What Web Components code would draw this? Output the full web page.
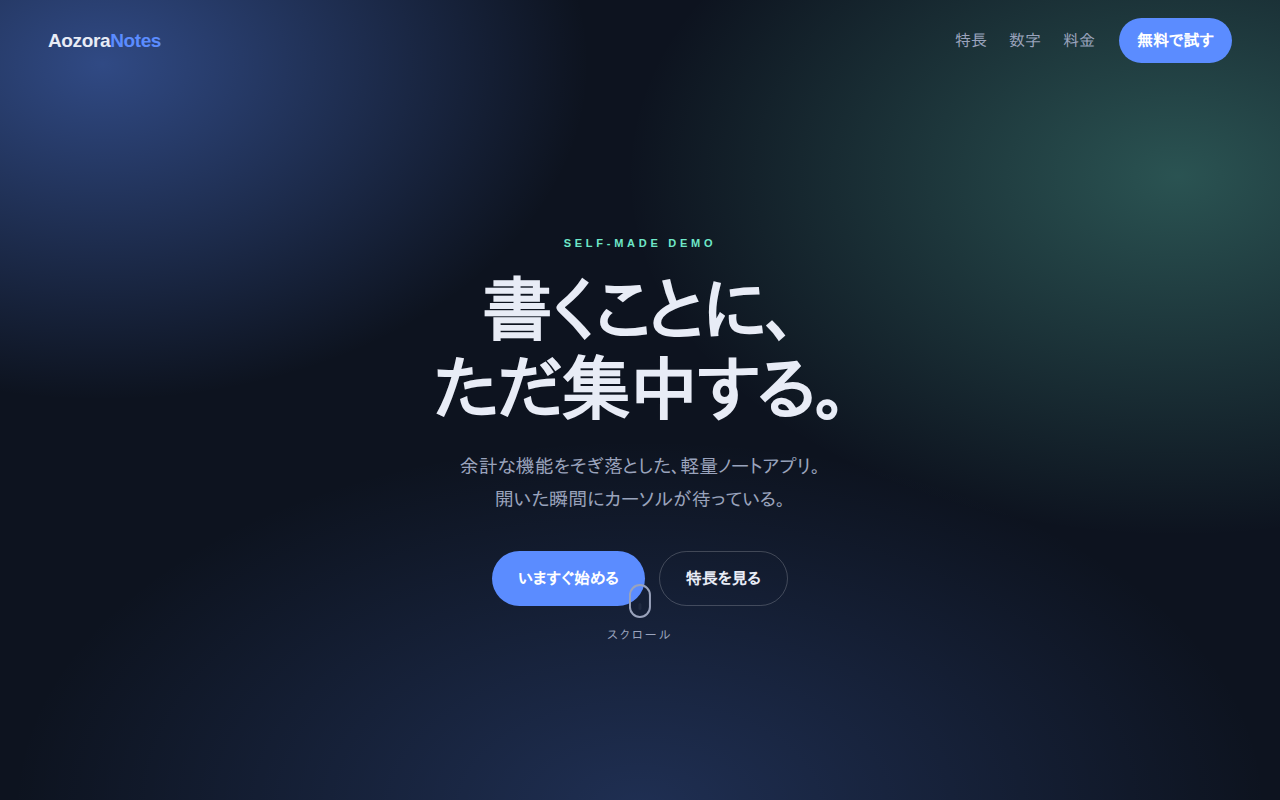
<!DOCTYPE html>
<html lang="ja">
<head>
<meta charset="utf-8">
<meta name="viewport" content="width=device-width, initial-scale=1">
<title>AozoraNotes</title>
<style>
  :root {
    --bg: #0d131f;
    --text: #e8ecf6;
    --muted: #9aa3bc;
    --accent: #5b8cff;
    --mint: #6ee7c8;
  }

  body {
    margin: 0;
    background: var(--bg);
    color: var(--text);
    font-family: "Liberation Sans", "IPAPGothic", "Noto Sans CJK JP", sans-serif;
    font-size: 16px;
    line-height: 25px;
  }
</style>
</head>
<body>
<an-page>
  <an-nav slot="nav">
    <an-logo slot="brand">Aozora<span slot="accent">Notes</span></an-logo>
    <an-link href="#features">特長</an-link>
    <an-link href="#numbers">数字</an-link>
    <an-link href="#pricing">料金</an-link>
    <an-button slot="action" size="small">無料で試す</an-button>
  </an-nav>
  <an-hero>
    <span slot="eyebrow">SELF-MADE DEMO</span>
    <span slot="title">書くことに、<br>ただ集中する。</span>
    <span slot="lead">余計な機能をそぎ落とした、軽量ノートアプリ。<br>開いた瞬間にカーソルが待っている。</span>
    <an-button slot="actions">いますぐ始める</an-button>
    <an-button slot="actions" variant="ghost">特長を見る</an-button>
    <an-scroll-hint slot="hint">スクロール</an-scroll-hint>
  </an-hero>
</an-page>

<script>
class AnElement extends HTMLElement {
  constructor() {
    super();
    this.attachShadow({ mode: 'open' });
    this.shadowRoot.innerHTML = this.render();
  }
}

class AnPage extends AnElement {
  render() {
    return `
      <style>
        :host {
          display: flex;
          flex-direction: column;
          min-height: 100vh;
          background:
            radial-gradient(38% 42% at 8% 8%, rgba(91, 140, 255, .45), transparent),
            radial-gradient(43% 45% at 92% 22%, rgba(110, 231, 200, .3), transparent),
            radial-gradient(49% 46% at 50% 101%, rgba(91, 140, 255, .23), transparent);
        }
      </style>
      <slot name="nav"></slot>
      <slot></slot>
    `;
  }
}

class AnNav extends AnElement {
  render() {
    return `
      <style>
        :host {
          display: block;
        }

        header,
        .menu,
        nav {
          display: flex;
          align-items: center;
        }

        header {
          justify-content: space-between;
          padding: 18px 48px;
        }

        .menu {
          gap: 24px;
        }

        nav {
          gap: 22px;
        }
      </style>
      <header>
        <slot name="brand"></slot>
        <div class="menu">
          <nav><slot></slot></nav>
          <slot name="action"></slot>
        </div>
      </header>
    `;
  }
}

class AnLogo extends AnElement {
  render() {
    return `
      <style>
        :host {
          display: block;
          font-size: 19px;
          font-weight: 700;
          letter-spacing: -0.02em;
        }

        ::slotted(span) {
          color: var(--accent);
        }
      </style>
      <slot></slot><slot name="accent"></slot>
    `;
  }
}

class AnLink extends AnElement {
  render() {
    return `
      <style>
        :host {
          display: block;
        }

        a {
          color: var(--muted);
          text-decoration: none;
        }
      </style>
      <a href="${this.getAttribute('href')}"><slot></slot></a>
    `;
  }
}

class AnButton extends AnElement {
  render() {
    return `
      <style>
        :host {
          display: flex;
        }

        button {
          margin: 0;
          padding: 14px 26px;
          border: 0;
          border-radius: 999px;
          background: var(--accent);
          color: white;
          font: inherit;
          font-weight: 700;
          cursor: pointer;
        }

        :host([size="small"]) button {
          padding: 10px 18px;
        }

        :host([variant="ghost"]) button {
          border: 1px solid rgba(255, 255, 255, .2);
          background: transparent;
          color: var(--text);
        }
      </style>
      <button type="button"><slot></slot></button>
    `;
  }
}

class AnHero extends AnElement {
  render() {
    return `
      <style>
        :host {
          display: flex;
          flex: 1;
          flex-direction: column;
          align-items: center;
          padding: 150px 24px 80px;
          text-align: center;
        }

        .content {
          position: relative;
        }

        .eyebrow {
          margin: 0;
          color: var(--mint);
          font-size: 11px;
          font-weight: 700;
          letter-spacing: 0.34em;
        }

        h1 {
          margin: 16px 0 20px;
          font-size: 70px;
          line-height: 79px;
          letter-spacing: -2px;
        }

        .lead {
          margin: 0 0 35px;
          color: var(--muted);
          font-size: 19px;
          line-height: 33px;
        }

        .actions {
          display: flex;
          justify-content: center;
          gap: 14px;
        }

        /* The hint floats over the bottom of the buttons */
        .hint {
          position: absolute;
          bottom: -39px;
          left: 50%;
          transform: translateX(-50%);
        }
      </style>
      <div class="content">
        <p class="eyebrow"><slot name="eyebrow"></slot></p>
        <h1><slot name="title"></slot></h1>
        <p class="lead"><slot name="lead"></slot></p>
        <div class="actions"><slot name="actions"></slot></div>
        <div class="hint"><slot name="hint"></slot></div>
      </div>
    `;
  }
}

class AnScrollHint extends AnElement {
  render() {
    return `
      <style>
        :host {
          display: flex;
          flex-direction: column;
          align-items: center;
          gap: 7px;
          color: var(--muted);
          font-size: 12px;
          line-height: 20px;
          letter-spacing: 0.2em;
          white-space: nowrap;
        }

        svg {
          display: block;
        }
      </style>
      <svg width="22" height="34" viewBox="0 0 22 34" fill="none" aria-hidden="true">
        <rect x="1" y="1" width="20" height="32" rx="10" stroke="currentColor" stroke-width="2"/>
        <rect x="9.5" y="19" width="3" height="7" rx="1.5" fill="currentColor" opacity=".08"/>
      </svg>
      <slot></slot>
    `;
  }
}

customElements.define('an-page', AnPage);
customElements.define('an-nav', AnNav);
customElements.define('an-logo', AnLogo);
customElements.define('an-link', AnLink);
customElements.define('an-button', AnButton);
customElements.define('an-hero', AnHero);
customElements.define('an-scroll-hint', AnScrollHint);
</script>
</body>
</html>
